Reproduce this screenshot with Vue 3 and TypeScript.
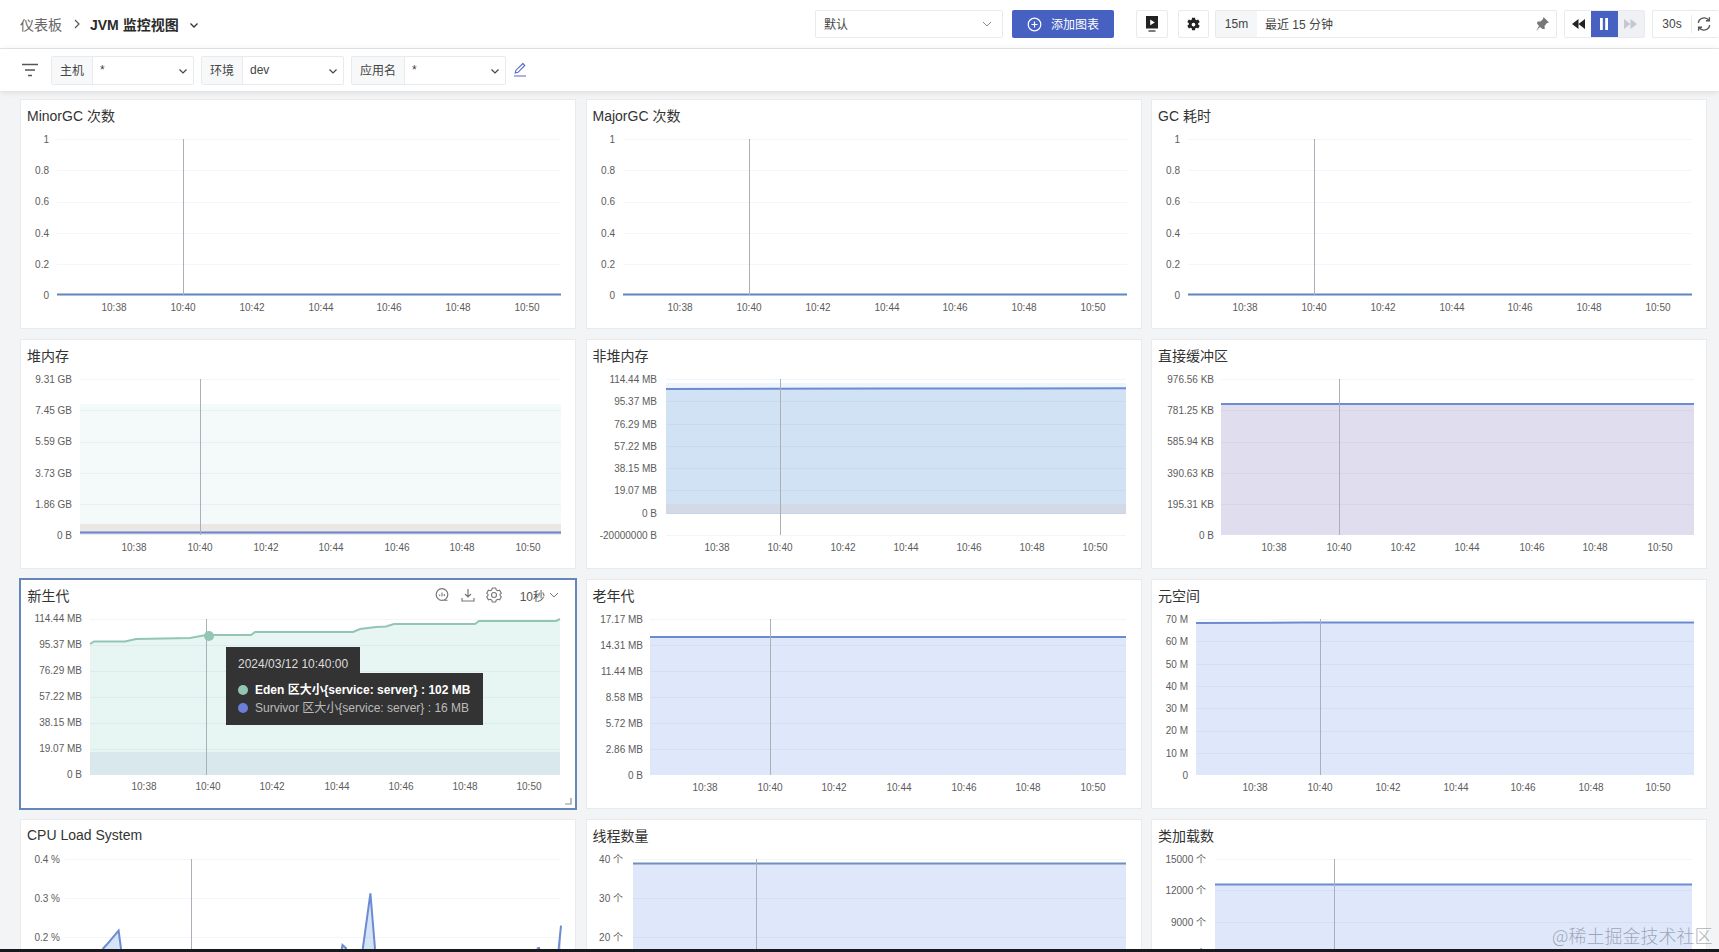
<script setup lang="ts">
interface Band { y1: number; y2: number; fill: string }
interface Series { points: number[][]; stroke: string; fill?: string; strokeWidth?: number }
interface Chart {
  title: string; left: number; right: number; top: number; bottom: number;
  labelX: number; yLabels: [string, number][]; grid: number[]; xLabels: number[]; cross: number;
  bands: Band[]; series: Series[]; over?: Band[]; active?: boolean;
}
const times = ['10:38', '10:40', '10:42', '10:44', '10:46', '10:48', '10:50']
const even = (a: number, b: number, n: number) => Array.from({ length: n }, (_, i) => Math.round(a + ((b - a) * i) / (n - 1)))
const lbls = (names: string[], ys: number[]): [string, number][] => names.map((n, i) => [n, ys[i]])
const flat = (l: number, r: number, y: number) => [[l, y], [r, y]]

const gc = (title: string): Chart => ({
  title, left: 37, right: 541, top: 40, bottom: 196, labelX: 29,
  yLabels: lbls(['1', '0.8', '0.6', '0.4', '0.2', '0'], even(40, 196, 6)),
  grid: even(40, 165, 5), xLabels: even(94, 507, 7), cross: 163, bands: [],
  series: [{ points: flat(37, 541, 195.5), stroke: '#5f86bb', strokeWidth: 2 }]
})

const charts: Chart[] = [
  gc('MinorGC 次数'), gc('MajorGC 次数'), gc('GC 耗时'),
  {
    title: '堆内存', left: 60, right: 541, top: 40, bottom: 196, labelX: 52,
    yLabels: lbls(['9.31 GB', '7.45 GB', '5.59 GB', '3.73 GB', '1.86 GB', '0 B'], even(40, 196, 6)),
    grid: even(40, 165, 5), xLabels: [114, 180, 246, 311, 377, 442, 508], cross: 180,
    bands: [{ y1: 65, y2: 196, fill: '#f3faf9' }, { y1: 185, y2: 196, fill: '#ebe7e4' }],
    series: [{ points: flat(60, 541, 193.5), stroke: '#6b82cf', strokeWidth: 2 }]
  },
  {
    title: '非堆内存', left: 80, right: 540, top: 40, bottom: 196, labelX: 71,
    yLabels: lbls(['114.44 MB', '95.37 MB', '76.29 MB', '57.22 MB', '38.15 MB', '19.07 MB', '0 B', '-20000000 B'], even(40, 196, 8)),
    grid: even(40, 196, 8), xLabels: [131, 194, 257, 320, 383, 446, 509], cross: 194,
    bands: [{ y1: 44, y2: 50, fill: '#eef5fb' }, { y1: 50, y2: 175, fill: '#d1e2f5' }, { y1: 165, y2: 175, fill: '#d4d9e7' }],
    series: [{ points: [[80, 50], [300, 49.6], [540, 49.2]], stroke: '#6c8bd2', strokeWidth: 2 }]
  },
  {
    title: '直接缓冲区', left: 70, right: 543, top: 40, bottom: 196, labelX: 63,
    yLabels: lbls(['976.56 KB', '781.25 KB', '585.94 KB', '390.63 KB', '195.31 KB', '0 B'], even(40, 196, 6)),
    grid: even(40, 165, 5), xLabels: [123, 188, 252, 316, 381, 444, 509], cross: 188,
    bands: [{ y1: 65, y2: 196, fill: '#e0ddef' }],
    series: [{ points: flat(70, 543, 65), stroke: '#6c8bd2', strokeWidth: 2 }]
  },
  {
    title: '新生代', left: 71, right: 541, top: 41, bottom: 197, labelX: 63, active: true,
    yLabels: lbls(['114.44 MB', '95.37 MB', '76.29 MB', '57.22 MB', '38.15 MB', '19.07 MB', '0 B'], even(40, 196, 7)),
    grid: even(41, 171, 6), xLabels: [125, 189, 253, 318, 382, 446, 510], cross: 187, bands: [],
    over: [{ y1: 174, y2: 197, fill: '#d9e8ed' }],
    series: [{
      points: [[71, 66], [75, 63.5], [106, 63.5], [117, 61], [171, 60], [187, 57], [232, 57], [236, 54], [334, 54], [341, 51], [357, 49], [367, 48.5], [375, 46], [456, 46], [460, 43], [537, 43], [541, 41]],
      stroke: '#93c5b5', fill: '#e7f5f3', strokeWidth: 2
    }]
  },
  {
    title: '老年代', left: 64, right: 540, top: 40, bottom: 196, labelX: 57,
    yLabels: lbls(['17.17 MB', '14.31 MB', '11.44 MB', '8.58 MB', '5.72 MB', '2.86 MB', '0 B'], even(40, 196, 7)),
    grid: even(40, 170, 6), xLabels: [119, 184, 248, 313, 378, 442, 507], cross: 184, bands: [],
    series: [{ points: flat(64, 540, 58), stroke: '#6c8bd2', fill: '#dfe7fb', strokeWidth: 2 }]
  },
  {
    title: '元空间', left: 45, right: 543, top: 40, bottom: 196, labelX: 37,
    yLabels: lbls(['70 M', '60 M', '50 M', '40 M', '30 M', '20 M', '10 M', '0'], even(40, 196, 8)),
    grid: even(40, 174, 7), xLabels: [104, 169, 237, 305, 372, 440, 507], cross: 169, bands: [],
    series: [{ points: [[45, 44], [150, 43.5], [543, 43.5]], stroke: '#6c8bd2', fill: '#dfe7fb', strokeWidth: 2 }]
  },
  {
    title: 'CPU Load System', left: 45, right: 541, top: 40, bottom: 196, labelX: 40,
    yLabels: lbls(['0.4 %', '0.3 %', '0.2 %'], even(40, 118, 3)),
    grid: even(40, 157, 4), xLabels: [], cross: 171, bands: [],
    series: [{
      points: [[45, 190], [80, 150], [83.3, 129.3], [87, 125.3], [98.6, 111.7], [101, 129.7], [105, 150], [318, 150], [321.8, 129.7], [322.5, 126], [326, 129.3], [330, 150], [339, 150], [342.8, 129.7], [350.4, 74.3], [355, 129.7], [358, 150], [514, 150], [517.7, 129.3], [519, 129], [521, 135], [536, 150], [538.7, 129.7], [541, 106.7]],
      stroke: '#6c8bd2', fill: '#d6e4f8', strokeWidth: 2
    }]
  },
  {
    title: '线程数量', left: 47, right: 540, top: 40, bottom: 196, labelX: 37,
    yLabels: lbls(['40 个', '30 个', '20 个'], even(40, 118, 3)),
    grid: even(40, 157, 4), xLabels: [], cross: 170, bands: [],
    series: [{ points: flat(47, 540, 44.5), stroke: '#6f8fbf', fill: '#dfe7fb', strokeWidth: 2 }]
  },
  {
    title: '类加载数', left: 64, right: 541, top: 40, bottom: 196, labelX: 55,
    yLabels: lbls(['15000 个', '12000 个', '9000 个', '6000 个'], even(40, 134, 4)),
    grid: even(40, 165, 5), xLabels: [], cross: 183, bands: [],
    series: [{ points: flat(64, 541, 65.5), stroke: '#6c8bd2', fill: '#dfe7fb', strokeWidth: 2 }]
  }
]

const line = (p: number[][]) => p.map((q) => q.join(',')).join(' ')
const area = (p: number[][], bottom: number) =>
  `${p[0][0]},${bottom} ${line(p)} ${p[p.length - 1][0]},${bottom}`

const filters = [
  { label: '主机', value: '*', width: '143px', labelW: '41px' },
  { label: '环境', value: 'dev', width: '143px', labelW: '41px' },
  { label: '应用名', value: '*', width: '155px', labelW: '53px' }
]
</script>

<template>
  <div class="page">
    <header class="topbar">
      <div class="crumbs">
        <span class="crumb">仪表板</span>
        <svg class="crumb-sep" width="8" height="12" viewBox="0 0 8 12"><path d="M2 2l4 4-4 4" fill="none" stroke="#555" stroke-width="1.2" /></svg>
        <b class="crumb-cur">JVM 监控视图</b>
        <svg class="crumb-chev" width="10" height="10" viewBox="0 0 10 10"><path d="M1.5 3.5L5 7l3.5-3.5" fill="none" stroke="#333" stroke-width="1.3" /></svg>
      </div>
      <div class="actions">
        <div class="box select-box">
          <span class="lift">默认</span>
          <svg width="10" height="10" viewBox="0 0 10 10"><path d="M1 3l4 4 4-4" fill="none" stroke="#888" stroke-width="1" /></svg>
        </div>
        <button class="primary">
          <svg width="15" height="15" viewBox="0 0 15 15"><circle cx="7.5" cy="7.5" r="6.3" fill="none" stroke="#fff" stroke-width="1.2" /><path d="M7.5 4.5v6M4.5 7.5h6" stroke="#fff" stroke-width="1.2" /></svg>
          <span class="lift">添加图表</span>
        </button>
        <div class="box icon-box play-box">
          <svg width="14" height="18" viewBox="0 0 14 18"><path d="M1 1h12v12.5H1z" fill="#222" /><path d="M5.2 4.5l4.6 2.9-4.6 2.9z" fill="#fff" /><path d="M3.5 16h7" stroke="#444" stroke-width="1.4" /></svg>
        </div>
        <div class="box icon-box gear-box">
          <svg width="15" height="15" viewBox="0 0 24 24"><path fill="#222" fill-rule="evenodd" d="M14.4 1l.5 3.1 1.7.9 2.9-1.2 2.4 4.2-2.5 1.9v2.2l2.5 1.9-2.4 4.2-2.9-1.2-1.7.9-.5 3.1H9.6l-.5-3.1-1.7-.9-2.9 1.2-2.4-4.2 2.5-1.9V10L2.1 8.1l2.4-4.2 2.9 1.2 1.7-.9.5-3.1zM12 9a3 3 0 100 6 3 3 0 000-6z" /></svg>
        </div>
        <div class="box range-box">
          <span class="range-tag">15m</span>
          <span class="range-text lift">最近 15 分钟</span>
          <svg width="16" height="16" viewBox="0 0 16 16"><path d="M9.5 1L15 6.5 13 7l-2.5 3 .3 3H8.5L6 11l-4 4 3-5-2-2.5.5-2h3L9 3z" fill="#777" /></svg>
        </div>
        <div class="box player">
          <span class="p-cell"><svg width="13" height="10" viewBox="0 0 13 10"><path d="M6.5 0v10L0 5zM13 0v10L6.5 5z" fill="#222" /></svg></span>
          <span class="p-cell p-on"><svg width="8" height="12" viewBox="0 0 8 12"><path d="M0 0h2.8v12H0zM5.2 0H8v12H5.2z" fill="#fff" /></svg></span>
          <span class="p-cell p-off"><svg width="13" height="10" viewBox="0 0 13 10"><path d="M0 0v10l6.5-5zM6.5 0v10L13 5z" fill="#c3c8d2" /></svg></span>
        </div>
        <div class="box refresh">
          <span class="refresh-txt">30s</span>
          <span class="refresh-ico"><svg width="16" height="16" viewBox="0 0 14 14"><path d="M2 6a5.2 5.2 0 019.3-2.2M12 8a5.2 5.2 0 01-9.3 2.2" fill="none" stroke="#555" stroke-width="1.2" /><path d="M11.7 1.2v3h-3M2.3 12.8v-3h3" fill="none" stroke="#555" stroke-width="1.2" /></svg></span>
        </div>
      </div>
    </header>

    <section class="filterbar">
      <svg class="filter-ico" width="18" height="14" viewBox="0 0 18 14"><path d="M1 1.5h16M4 7h10M7 12.500h4" stroke="#555" stroke-width="1.5" /></svg>
      <div v-for="f in filters" :key="f.label" class="fgroup" :style="{ width: f.width }">
        <span class="flabel" :style="{ width: f.labelW }">{{ f.label }}</span>
        <span class="fvalue">{{ f.value }}</span>
        <svg class="fchev" width="10" height="10" viewBox="0 0 10 10"><path d="M1.5 3.5L5 7l3.5-3.5" fill="none" stroke="#444" stroke-width="1.2" /></svg>
      </div>
      <svg width="14" height="16" viewBox="0 0 14 16"><path d="M9.8 1.5l2 2L5 10.3l-2.8.7.8-2.800zM1 14h12" fill="none" stroke="#5468c8" stroke-width="1.1" /></svg>
    </section>

    <main class="grid">
      <article v-for="c in charts" :key="c.title" class="card" :class="{ active: c.active }">
        <div class="card-head">
          <span class="card-title">{{ c.title }}</span>
          <div v-if="c.active" class="card-tools">
            <svg width="16" height="16" viewBox="0 0 16 16"><circle cx="8" cy="7.5" r="5.8" fill="none" stroke="#777" stroke-width="1.2" /><path d="M5.7 9V7.5M8 9.5v-4M10.3 9V7M10 13.3h3.5" fill="none" stroke="#777" stroke-width="1.1" /></svg>
            <svg width="16" height="16" viewBox="0 0 16 16"><path d="M8 2v7.5M5 7l3 3 3-3M2 11v3h12v-3" fill="none" stroke="#777" stroke-width="1.2" /></svg>
            <svg width="16" height="16" viewBox="0 0.5 16 16"><path d="M6.3 1.5h3.4l.5 1.8 1.6.9 1.8-.5 1.7 2.9-1.3 1.4v1l1.3 1.4-1.7 2.9-1.8-.5-1.6.9-.5 1.800H6.300l-.5-1.800-1.600-.9-1.800.5L.7 10.400 2 9V8L.7 6.600l1.700-2.900 1.800.5 1.600-.9z" fill="none" stroke="#777" stroke-width="1.1" /><circle cx="8" cy="8.5" r="2.5" fill="none" stroke="#777" stroke-width="1.1" /></svg>
            <span class="interval">10秒</span>
            <svg width="10" height="10" viewBox="0 0 10 10"><path d="M1 3l4 4 4-4" fill="none" stroke="#777" stroke-width="1" /></svg>
          </div>
        </div>
        <svg class="plot" width="556" height="198" viewBox="0 32 556 198">
          <rect v-for="b in c.bands" :key="b.y1" :x="c.left" :y="b.y1" :width="c.right - c.left" :height="b.y2 - b.y1" :fill="b.fill" />
          <g v-for="(s, i) in c.series" :key="i">
            <polygon v-if="s.fill" :points="area(s.points, c.bottom)" :fill="s.fill" />
          </g>
          <rect v-for="b in c.over" :key="b.y1" :x="c.left" :y="b.y1" :width="c.right - c.left" :height="b.y2 - b.y1" :fill="b.fill" />
          <line v-for="g in c.grid" :key="g" :x1="c.left" :x2="c.right" :y1="g + 0.5" :y2="g + 0.5" stroke="#5b7a9a" stroke-opacity=".07" />
          <g v-for="(s, i) in c.series" :key="'l' + i">
            <polyline :points="line(s.points)" fill="none" :stroke="s.stroke" :stroke-width="s.strokeWidth" />
          </g>
          <line :x1="c.cross + 0.5" :x2="c.cross + 0.5" :y1="c.top" :y2="c.bottom" stroke="#aab0b8" />
          <circle v-if="c.active" cx="190" cy="58" r="5" fill="#93c5b5" />
          <text v-for="y in c.yLabels" :key="y[0]" :x="c.labelX" :y="y[1] + 3.5" class="tick" text-anchor="end">{{ y[0] }}</text>
          <text v-for="(x, i) in c.xLabels" :key="x" :x="x" y="212" class="tick" text-anchor="middle">{{ times[i] }}</text>
        </svg>
        <div v-if="c.active" class="tooltip">
          <div class="tip-title">2024/03/12 10:40:00</div>
          <div class="tip-body">
            <div class="tip-row strong"><i class="dot green"></i>Eden 区大小{service: server} : 102 MB</div>
            <div class="tip-row"><i class="dot blue"></i>Survivor 区大小{service: server} : 16 MB</div>
          </div>
        </div>
        <svg v-if="c.active" class="handle" width="7" height="7" viewBox="0 0 7 7"><path d="M6 0v6H0" fill="none" stroke="#8a8f98" stroke-width="1.2" /></svg>
      </article>
      <span class="watermark">@稀土掘金技术社区</span>
    </main>
    <div class="blackbar"></div>
  </div>
</template>

<style>
html, body { margin: 0; padding: 0; overflow: hidden; }
</style>

<style scoped>
.page {
  width: 1719px; height: 952px; display: flex; flex-direction: column; overflow: hidden;
  background: #f3f4f6; color: #333;
  font-family: "Liberation Sans", "Noto Sans CJK SC", sans-serif; font-size: 12px;
}
.topbar {
  height: 48px; flex: none; background: #fff; border-bottom: 1px solid #e8e9eb;
  display: flex; align-items: center; justify-content: space-between; padding-left: 20px;
}
.crumbs { display: flex; align-items: center; font-size: 14px; }
.crumb { color: #666; }
.crumb-sep { margin: 0 9px 0 11px; }
.crumb-cur { color: #2b2b2b; }
.crumb-chev { margin-left: 10px; margin-top: 2px; }
.actions { display: flex; align-items: center; height: 28px; }
.box {
  box-sizing: border-box; height: 28px; background: #fff; border: 1px solid #e9eaec;
  border-radius: 2px; display: flex; align-items: center;
}
.lift { padding-bottom: 2px; }
.select-box { width: 188px; padding: 0 10px 0 8px; justify-content: space-between; color: #444; }
.primary {
  box-sizing: border-box; width: 102px; height: 28px; margin-left: 9px; border: 0; border-radius: 2px;
  background: #4761c2; color: #fff; font: inherit; display: flex; align-items: center; padding: 0 0 0 15px; gap: 9px;
}
.icon-box { justify-content: center; }
.play-box { width: 32px; margin-left: 22px; }
.gear-box { width: 31px; margin-left: 10px; }
.range-box { width: 342px; margin-left: 6px; }
.range-tag { width: 41px; height: 100%; background: #f5f6f7; display: flex; align-items: center; justify-content: center; color: #444; }
.range-text { flex: 1; padding-left: 8px; color: #444; }
.range-box svg { margin-right: 6px; }
.player { width: 81px; margin-left: 7px; }
.p-cell { width: 27px; height: 100%; display: flex; align-items: center; justify-content: center; }
.p-on { background: #4761c2; }
.p-off { background: #f0f1f4; }
.refresh { width: 67px; margin-left: 7px; border-right: 0; }
.refresh-txt { width: 38px; text-align: center; color: #444; }
.refresh-ico { border-left: 1px solid #e9eaec; height: 18px; display: flex; align-items: center; padding-left: 4px; }
.filterbar {
  height: 42px; flex: none; background: #fff; box-shadow: 0 1px 6px rgba(0, 0, 0, .12);
  display: flex; align-items: center; position: relative; z-index: 1;
}
.filter-ico { margin-left: 21px; margin-right: 12px; }
.fgroup {
  box-sizing: border-box; height: 29px; border: 1px solid #e9eaec; border-radius: 2px; margin-right: 7px;
  display: flex; align-items: center; background: #fff; position: relative;
}
.flabel {
  box-sizing: border-box; height: 100%; background: #f7f8f9; border-right: 1px solid #e9eaec; padding-bottom: 2px;
  display: flex; align-items: center; justify-content: center; color: #444; flex: none;
}
.fvalue { padding-left: 7px; color: #444; }
.fchev { position: absolute; right: 5px; top: 9px; }
.grid {
  flex: 1; min-height: 0; overflow: hidden; position: relative; box-sizing: border-box; padding: 8px 11px 0 20px;
  display: grid; grid-template-columns: repeat(3, 556px); grid-auto-rows: 230px; gap: 10px 9.5px;
}
.card {
  box-sizing: border-box; background: #fff; border: 1px solid #e9eaec; position: relative;
  display: flex; flex-direction: column; overflow: hidden; min-width: 0;
}
.card.active { border: 2px solid #6486bb; margin: -1px; height: 232px; width: 558px; }
.card-head { height: 31px; box-sizing: border-box; padding: 0 0 1px 6px; flex: none; display: flex; align-items: center; justify-content: space-between; }
.card.active .card-head { padding-left: 6.5px; height: 30px; padding-bottom: 0; }
.card-title { font-size: 14px; color: #333; }
.card-tools { display: flex; align-items: center; color: #555; padding-right: 16px; }
.card-tools svg:nth-child(2), .card-tools svg:nth-child(3) { margin-left: 10px; }
.interval { margin-left: 18px; margin-right: 4px; }
.plot { display: block; flex: none; margin-left: -1px; }
.card.active .plot { margin-left: -2px; }
.tick { font-size: 10px; fill: #5c5c5c; }
.tooltip { position: absolute; left: 205px; top: 67px; color: #ddd; white-space: nowrap; line-height: 18px; }
.tip-title { background: #333; width: 134px; height: 26px; box-sizing: border-box; padding: 8px 0 0 12px; }
.tip-body { background: #333; width: 257px; height: 52px; box-sizing: border-box; padding: 8px 0 0 12px; }
.tip-row { display: flex; align-items: center; color: #bbb; }
.tip-row.strong { color: #fff; font-weight: 700; }
.dot { width: 10px; height: 10px; border-radius: 50%; margin-right: 7px; flex: none; }
.green { background: #93c5b5; }
.blue { background: #6b7fd8; }
.handle { position: absolute; right: 3px; bottom: 3px; }
.watermark {
  position: absolute; left: 1552px; top: 831px; font-size: 18px; line-height: 26px; white-space: nowrap;
  color: rgba(110, 120, 135, .6); font-family: "Noto Sans CJK SC", sans-serif; font-weight: 300;
}
.blackbar { height: 3px; flex: none; background: #17191c; }
</style>
